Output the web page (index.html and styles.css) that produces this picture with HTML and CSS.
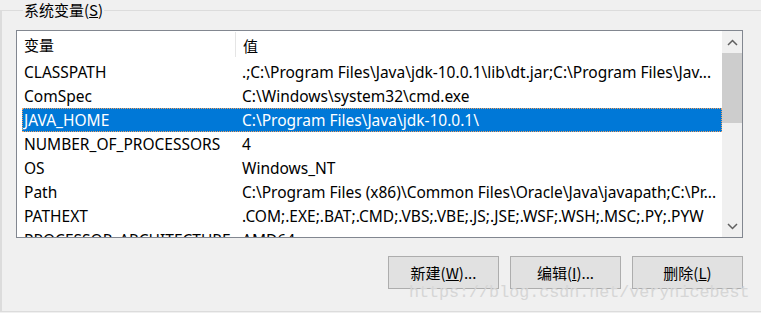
FILE: index.html
```html
<!DOCTYPE html>
<html lang="zh">
<head>
<meta charset="utf-8">
<link rel="stylesheet" href="styles.css">
</head>
<body>
<div class="dialog">
  <fieldset class="group">
    <legend class="group-title">系统变量(<u>S</u>)</legend>
    <div class="list">
      <div class="list-body">
        <div class="row header">
          <div class="c1">变量</div>
          <div class="c2">值</div>
        </div>
        <div class="row"><div class="c1">CLASSPATH</div><div class="c2">.;C:\Program Files\Java\jdk-10.0.1\lib\dt.jar;C:\Program Files\Jav...</div></div>
        <div class="row"><div class="c1">ComSpec</div><div class="c2">C:\Windows\system32\cmd.exe</div></div>
        <div class="row selected"><div class="c1">JAVA_HOME</div><div class="c2">C:\Program Files\Java\jdk-10.0.1\</div></div>
        <div class="row"><div class="c1">NUMBER_OF_PROCESSORS</div><div class="c2">4</div></div>
        <div class="row"><div class="c1">OS</div><div class="c2">Windows_NT</div></div>
        <div class="row"><div class="c1">Path</div><div class="c2">C:\Program Files (x86)\Common Files\Oracle\Java\javapath;C:\Pr...</div></div>
        <div class="row"><div class="c1">PATHEXT</div><div class="c2">.COM;.EXE;.BAT;.CMD;.VBS;.VBE;.JS;.JSE;.WSF;.WSH;.MSC;.PY;.PYW</div></div>
        <div class="row"><div class="c1">PROCESSOR_ARCHITECTURE</div><div class="c2">AMD64</div></div>
      </div>
      <div class="scrollbar">
        <div class="sb-btn"><svg width="11" height="7" viewBox="0 0 11 7"><path d="M1 6 L5.5 1.5 L10 6" fill="none" stroke="#606060" stroke-width="1.5"/></svg></div>
        <div class="sb-track"><div class="sb-thumb"></div></div>
        <div class="sb-btn"><svg width="11" height="7" viewBox="0 0 11 7"><path d="M1 1 L5.5 5.5 L10 1" fill="none" stroke="#606060" stroke-width="1.5"/></svg></div>
      </div>
    </div>
    <div class="buttons">
      <button class="btn">新建(<u>W</u>)...</button>
      <button class="btn">编辑(<u>I</u>)...</button>
      <button class="btn">删除(<u>L</u>)</button>
    </div>
  </fieldset>
  <div class="watermark">https://blog.csdn.net/verynicebest</div>
</div>
</body>
</html>
```
FILE: styles.css
```css
html, body {
  margin: 0;
  padding: 0;
  background: #f0f0f0;
}
body {
  width: 761px;
  height: 313px;
  overflow: hidden;
  font-family: "Segoe UI", "Noto Sans", "Noto Sans CJK SC", sans-serif;
  font-size: 15px;
  color: #000;
}
.dialog {
  position: relative;
  width: 761px;
  height: 313px;
}
.group {
  box-sizing: border-box;
  margin: 0;
  width: 780px;
  height: 312px;
  border: 2px solid #dcdcdc;
  border-right: none;
  border-width: 1px 0 1px 2px;
  padding: 10px 0 0 14px;
}
.group-title {
  font-family: "Noto Sans CJK SC", sans-serif;
  font-size: 15px;
  padding: 0 1px;
  margin-left: 7px;
  line-height: 20px;
}
.list {
  display: flex;
  width: 727px;
  height: 208px;
  border: 1px solid #828790;
  background: #fff;
  box-sizing: border-box;
}
.list-body {
  flex: 1;
  overflow: hidden;
  padding-left: 5px;
}
.row {
  display: flex;
  height: 24px;
  align-items: center;
  font-family: "Noto Sans", "Noto Sans CJK SC", sans-serif;
  font-size: 15.5px;
  white-space: nowrap;
  padding-left: 2px;
}
.row .c1 {
  width: 217px;
  flex: none;
}
.row .c2 {
  padding-left: 1px;
}
.header {
  height: 29px;
  align-items: center;
}
.header .c1 {
  font-family: "Noto Sans CJK SC", sans-serif;
  font-size: 15px;
  width: 211px;
  border-right: 1px solid #e5e5e5;
  height: 25px;
  line-height: 25px;
  margin-right: 6px;
  align-self: flex-start;
  margin-top: 1px;
}
.header .c2 {
  font-family: "Noto Sans CJK SC", sans-serif;
  font-size: 15px;
  padding-left: 1px;
}
.selected {
  background: #0078d7;
  color: #fff;
  outline: 1px dotted #f0a060;
  outline-offset: -1px;
}
.scrollbar {
  width: 20px;
  flex: none;
  background: #f0f0f0;
  display: flex;
  flex-direction: column;
}
.sb-btn {
  height: 22px;
  display: flex;
  align-items: center;
  justify-content: center;
}
.sb-track {
  flex: 1;
}
.sb-thumb {
  height: 70px;
  background: #cdcdcd;
}
.buttons {
  display: flex;
  justify-content: flex-end;
  gap: 11px;
  width: 727px;
  margin-top: 18px;
}
.btn {
  width: 111px;
  height: 33px;
  background: #e1e1e1;
  border: 1px solid #adadad;
  font-family: "Noto Sans CJK SC", sans-serif;
  font-size: 15px;
  color: #000;
  padding: 0;
}
.watermark {
  position: absolute;
  left: 409px;
  top: 283px;
  font-family: "Liberation Mono", monospace;
  font-size: 16.7px;
  color: #d6d6d6;
  white-space: nowrap;
  pointer-events: none;
}
```
